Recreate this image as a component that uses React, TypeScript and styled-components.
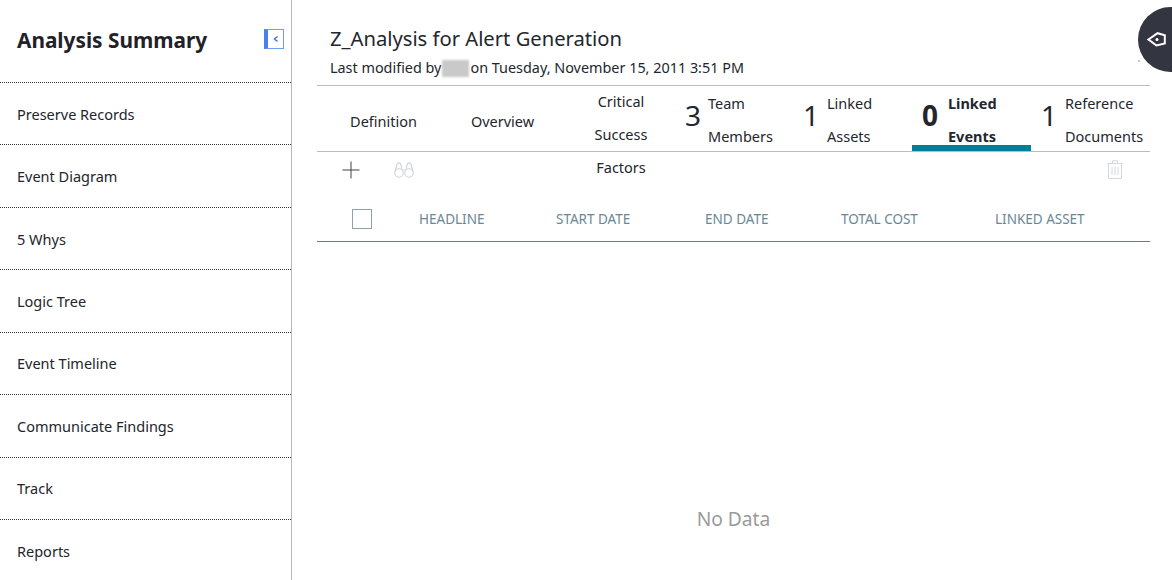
import React from "react";
import styled, { createGlobalStyle } from "styled-components";

const Global = createGlobalStyle`
  html, body { margin: 0; padding: 0; background: #fff; }
  body { font-family: "Noto Sans", "Liberation Sans", sans-serif; color: #1f2229; overflow: hidden; }
`;

const Page = styled.div`
  position: relative;
  display: flex;
  width: 1172px;
  height: 580px;
  overflow: hidden;
`;

const Sidebar = styled.aside`
  flex: 0 0 292px;
  box-sizing: border-box;
  height: 580px;
  border-right: 1px solid #b9b9b9;
`;

const SideHead = styled.div`
  display: flex;
  align-items: center;
  justify-content: space-between;
  box-sizing: border-box;
  height: 83px;
  padding: 0 7px 4px 17px;
  border-bottom: 1px dotted #333;
`;

const SideTitle = styled.h1`
  margin: 2px 0 0;
  font-size: 20.8px;
  font-weight: 700;
  color: #1f2229;
`;

const Collapse = styled.button`
  display: flex;
  align-items: center;
  justify-content: center;
  box-sizing: border-box;
  width: 20px;
  height: 20px;
  padding: 0;
  background: #fff;
  border: 1px solid #6d9df5;
  border-left: 4px solid #4a80ee;
`;

const SideItem = styled.div<{ $last?: boolean }>`
  display: flex;
  align-items: center;
  box-sizing: border-box;
  height: 62.45px;
  padding-left: 17px;
  font-size: 14.5px;
  color: #22252c;
  border-bottom: ${(p) => (p.$last ? "none" : "1px dotted #333")};
`;

const Main = styled.main`
  flex: 0 0 833px;
  min-width: 0;
  margin-left: 25px;
  display: flex;
  flex-direction: column;
`;

const Header = styled.header`
  box-sizing: border-box;
  height: 86px;
  padding: 23px 0 0 13px;
  border-bottom: 1px solid #bcbcbc;
`;

const Title = styled.h2`
  margin: 0;
  font-size: 20.2px;
  line-height: 30px;
  font-weight: 400;
  color: #23262d;
`;

const Modified = styled.div`
  display: flex;
  align-items: center;
  font-size: 14.4px;
  line-height: 30px;
  white-space: nowrap;
  color: #23262d;
`;

const Blurred = styled.span`
  display: inline-block;
  width: 27px;
  height: 17px;
  margin: 0 1px 0 1px;
  background: #c9c9c9;
  filter: blur(1px);
`;

const Tabs = styled.nav`
  display: flex;
  box-sizing: border-box;
  height: 66px;
  border-bottom: 1px solid #bcbcbc;
  font-size: 14.5px;
  color: #23262d;
`;

const PlainTab = styled.div<{ $w: number }>`
  flex: 0 0 ${(p) => p.$w}px;
  padding-top: 22px;
  line-height: 27px;
  text-align: center;
`;

const StackTab = styled.div<{ $w: number }>`
  flex: 0 0 ${(p) => p.$w}px;
  height: 99px;
  margin: -1px 0 0 20px;
  line-height: 33px;
  text-align: center;
`;

const CountTab = styled.div<{ $w: number; $pad: number; $active?: boolean }>`
  position: relative;
  display: flex;
  align-items: flex-start;
  flex: 0 0 ${(p) => p.$w}px;
  box-sizing: border-box;
  height: 65px;
  padding-left: ${(p) => p.$pad}px;
  font-weight: ${(p) => (p.$active ? 700 : 400)};
  ${(p) =>
    p.$active &&
    `&::after { content: ""; position: absolute; left: 0; right: 0; bottom: 0; height: 6px; background: #007f99; }`}
`;

const Count = styled.span<{ $w: number }>`
  flex: 0 0 ${(p) => p.$w}px;
  font-size: 28px;
  line-height: 59px;
`;

const CountLabel = styled.span`
  padding-top: 1px;
  line-height: 33px;
  white-space: nowrap;
`;

const Toolbar = styled.div`
  display: flex;
  align-items: center;
  gap: 34px;
  box-sizing: border-box;
  height: 38px;
  padding: 0 27px 3px 25px;
`;

const Spacer = styled.div`
  flex: 1;
`;

const TableHead = styled.div`
  display: grid;
  grid-template-columns: 67px 137px 149px 136px 154px 1fr;
  align-items: center;
  box-sizing: border-box;
  height: 52px;
  padding: 6px 0 0 35px;
  border-bottom: 1px solid #6f7d85;
  font-size: 13.5px;
  color: #6a8796;
`;

const Check = styled.span`
  display: block;
  box-sizing: border-box;
  width: 20px;
  height: 20px;
  border: 1px solid #8fa1aa;
`;

const Empty = styled.div`
  flex: 1;
  display: flex;
  align-items: flex-start;
  justify-content: center;
  padding-top: 263px;
  font-size: 19.2px;
  color: #9a9a9a;
`;

const Floating = styled.button`
  position: absolute;
  left: 1138px;
  top: 7px;
  display: flex;
  align-items: center;
  box-sizing: border-box;
  width: 65px;
  height: 65px;
  padding: 0 0 0 9px;
  border: none;
  border-radius: 50%;
  background: #333540;
`;

const Speck = styled.span`
  position: absolute;
  left: 1138px;
  top: 60px;
  width: 2px;
  height: 2px;
  background: #c8c8c8;
`;

const navItems = [
  "Preserve Records",
  "Event Diagram",
  "5 Whys",
  "Logic Tree",
  "Event Timeline",
  "Communicate Findings",
  "Track",
  "Reports",
];

const columns = ["HEADLINE", "START DATE", "END DATE", "TOTAL COST", "LINKED ASSET"];

export default function App() {
  return (
    <Page>
      <Global />
      <Sidebar>
        <SideHead>
          <SideTitle>Analysis Summary</SideTitle>
          <Collapse aria-label="Collapse">
            <svg width="8" height="8" viewBox="0 0 8 8">
              <path d="M5.5 1.5 L2.5 4 L5.5 6.5" fill="none" stroke="#4a6fe0" strokeWidth="1.5" />
            </svg>
          </Collapse>
        </SideHead>
        {navItems.map((item, i) => (
          <SideItem key={item} $last={i === navItems.length - 1}>
            {item}
          </SideItem>
        ))}
      </Sidebar>
      <Main>
        <Header>
          <Title>Z_Analysis for Alert Generation</Title>
          <Modified>
            Last modified by
            <Blurred />
            on Tuesday, November 15, 2011 3:51 PM
          </Modified>
        </Header>
        <Tabs>
          <PlainTab $w={133}>Definition</PlainTab>
          <PlainTab $w={105}>Overview</PlainTab>
          <StackTab $w={92}>
            Critical
            <br />
            Success
            <br />
            Factors
          </StackTab>
          <CountTab $w={128} $pad={18}>
            <Count $w={23}>3</Count>
            <CountLabel>
              Team
              <br />
              Members
            </CountLabel>
          </CountTab>
          <CountTab $w={117} $pad={8}>
            <Count $w={24}>1</Count>
            <CountLabel>
              Linked
              <br />
              Assets
            </CountLabel>
          </CountTab>
          <CountTab $w={119} $pad={10} $active>
            <Count $w={26}>0</Count>
            <CountLabel>
              Linked
              <br />
              Events
            </CountLabel>
          </CountTab>
          <CountTab $w={119} $pad={10}>
            <Count $w={24}>1</Count>
            <CountLabel>
              Reference
              <br />
              Documents
            </CountLabel>
          </CountTab>
        </Tabs>
        <Toolbar>
          <svg width="18" height="18" viewBox="0 0 18 18">
            <path d="M9 0.5 V17.5 M0.5 9 H17.5" stroke="#3c4048" strokeWidth="1" fill="none" />
          </svg>
          <svg width="20" height="18" viewBox="0 0 20 18" fill="none" stroke="#cfd3d6" strokeWidth="1.1">
            <circle cx="5" cy="12" r="4.2" />
            <circle cx="15" cy="12" r="4.2" />
            <path d="M1 11 L3 3 Q4.5 1 6.5 2.5 L8 8 M19 11 L17 3 Q15.5 1 13.5 2.5 L12 8 M8 9 H12" />
          </svg>
          <Spacer />
          <svg width="16" height="19" viewBox="0 0 16 19" fill="none" stroke="#d4d8db" strokeWidth="1">
            <path d="M0.5 3.5 H15.5 M5.5 3.5 V0.8 H10.5 V3.5 M1.5 3.5 V18.5 H14.5 V3.5" />
            <path d="M5 7 V15 M8 7 V15 M11 7 V15" />
          </svg>
        </Toolbar>
        <TableHead>
          <Check />
          {columns.map((c) => (
            <span key={c}>{c}</span>
          ))}
        </TableHead>
        <Empty>No Data</Empty>
      </Main>
      <Floating aria-label="Back">
        <svg width="19" height="15" viewBox="0 0 19 15" fill="none" stroke="#fff" strokeWidth="2">
          <path d="M1.5 7.5 L10.5 1.2 L17.8 3.2 V11.5 L9.5 13.5 Z" strokeLinejoin="miter" />
          <circle cx="10" cy="7.5" r="1.5" fill="#fff" stroke="none" />
        </svg>
      </Floating>
      <Speck />
    </Page>
  );
}
